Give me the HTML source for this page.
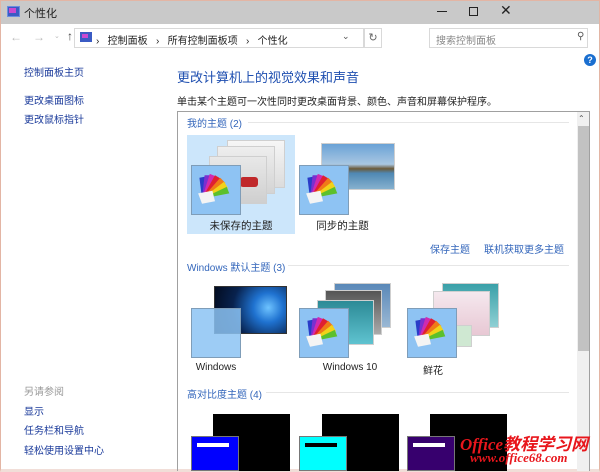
<!DOCTYPE html>
<html><head><meta charset="utf-8"><style>
*{margin:0;padding:0;box-sizing:border-box}
body{width:600px;height:472px;overflow:hidden;background:#fff;position:relative;font-family:"Liberation Sans","Noto Sans CJK SC",sans-serif;font-size:10px;color:#1e1e1e}
.a{position:absolute}
.lnk{color:#1a3a9a;font-size:10px}
.blue{color:#3366bb}
.hdr{color:#3366bb;font-size:10px}
.hline{position:absolute;height:1px;background:#e6e6e6}
.sq{position:absolute;width:50px;height:50px;background:#8ec3f3;border:1px solid #7f9db8}
.img{position:absolute;border:1px solid #cfcfcf}
.lbl{position:absolute;font-size:10px;color:#222;text-align:center}
</style></head><body>
<div class="a" style="left:0;top:0;width:600px;height:472px;border:1px solid #e3b5a4;border-bottom:3px solid #f1ded8"></div>
<div class="a" style="left:1px;top:1px;width:598px;height:23px;background:#c9c9c9"></div>
<div class="a" style="left:7px;top:6px;width:13px;height:11px;background:#3a5bc4;border:1px solid #6a8ee0"></div>
<div class="a" style="left:9px;top:8px;width:7px;height:5px;background:#c94ad0"></div>
<div class="a" style="left:24px;top:5px;font-size:11px">个性化</div>
<div class="a" style="left:437px;top:11px;width:10px;height:1px;background:#222"></div>
<div class="a" style="left:469px;top:7px;width:9px;height:9px;border:1px solid #222"></div>
<div class="a" style="left:500px;top:2px;font-size:14px;color:#222">✕</div>
<div class="a" style="left:10px;top:30px;color:#bbb;font-size:12px">←</div>
<div class="a" style="left:33px;top:30px;color:#bbb;font-size:12px">→</div>
<div class="a" style="left:54px;top:32px;color:#bbb;font-size:7px">⌄</div>
<div class="a" style="left:67px;top:29px;color:#444;font-size:12px">↑</div>
<div class="a" style="left:74px;top:28px;width:290px;height:20px;border:1px solid #d9d9d9"></div>
<div class="a" style="left:80px;top:32px;width:12px;height:10px;background:#3a5bc4"></div>
<div class="a" style="left:82px;top:34px;width:6px;height:4px;background:#c94ad0"></div>
<div class="a" style="left:96px;top:32px;font-size:10px">›&nbsp;&nbsp;&nbsp;控制面板&nbsp;&nbsp;&nbsp;›&nbsp;&nbsp;&nbsp;所有控制面板项&nbsp;&nbsp;&nbsp;›&nbsp;&nbsp;&nbsp;个性化</div>
<div class="a" style="left:342px;top:31px;color:#555;font-size:9px">⌄</div>
<div class="a" style="left:364px;top:28px;width:18px;height:20px;border:1px solid #d9d9d9;color:#666;font-size:11px;text-align:center;line-height:18px">↻</div>
<div class="a" style="left:429px;top:28px;width:159px;height:20px;border:1px solid #d9d9d9"></div>
<div class="a" style="left:436px;top:32px;color:#888">搜索控制面板</div>
<div class="a" style="left:577px;top:31px;color:#555;font-size:10px">⚲</div>
<div class="a" style="left:584px;top:54px;width:12px;height:12px;border-radius:50%;background:#1a6fd0;color:#fff;font-size:9px;font-weight:bold;text-align:center;line-height:12px">?</div>
<div class="a lnk" style="left:24px;top:64px">控制面板主页</div>
<div class="a lnk" style="left:24px;top:92px">更改桌面图标</div>
<div class="a lnk" style="left:24px;top:111px">更改鼠标指针</div>
<div class="a" style="left:24px;top:383px;color:#999">另请参阅</div>
<div class="a lnk" style="left:24px;top:403px">显示</div>
<div class="a lnk" style="left:24px;top:422px">任务栏和导航</div>
<div class="a lnk" style="left:24px;top:442px">轻松使用设置中心</div>
<div class="a" style="left:177px;top:67px;font-size:13px;color:#1f4fb0">更改计算机上的视觉效果和声音</div>
<div class="a" style="left:177px;top:93px;font-size:10px;color:#222">单击某个主题可一次性同时更改桌面背景、颜色、声音和屏幕保护程序。</div>
<div class="a" style="left:177px;top:111px;width:413px;height:360px;border:1px solid #a0a0a0;border-bottom:none;overflow:hidden">
 <div class="a" style="left:399px;top:0;width:13px;height:360px;background:#f0f0f0"></div>
 <div class="a" style="left:400px;top:2px;font-size:8px;color:#555">⌃</div>
 <div class="a" style="left:400px;top:14px;width:11px;height:225px;background:#c2c2c2"></div>
</div>
<div class="a hdr" style="left:187px;top:115px">我的主题 (2)</div>
<div class="hline" style="left:248px;top:122px;width:321px"></div>
<div class="a" style="left:187px;top:135px;width:108px;height:99px;background:#cce6fb"></div>
<div class="img" style="left:227px;top:140px;width:58px;height:48px;background:linear-gradient(#f6f6f6,#dcdcdc)"></div>
<div class="img" style="left:217px;top:146px;width:58px;height:48px;background:linear-gradient(#eee,#d4d4d4)"></div>
<div class="img" style="left:209px;top:156px;width:58px;height:48px;background:linear-gradient(#e8e8e8,#cfcfcf)"></div>
<div class="a" style="left:240px;top:177px;width:18px;height:10px;background:#c0282a;border-radius:3px"></div>
<div class="sq" style="left:191px;top:165px"></div>
<div class="lbl" style="left:187px;top:218px;width:108px;font-size:10.5px">未保存的主题</div>
<div class="img" style="left:321px;top:143px;width:74px;height:47px;background:linear-gradient(#6aa2d6 0%,#a9c7e2 45%,#6b5a3a 55%,#4f88b3 65%,#86b1cf 100%)"></div>
<div class="sq" style="left:299px;top:165px"></div>
<div class="lbl" style="left:295px;top:218px;width:95px;font-size:10.5px">同步的主题</div>
<div class="a blue" style="left:430px;top:241px">保存主题</div>
<div class="a blue" style="left:484px;top:241px">联机获取更多主题</div>
<div class="a hdr" style="left:187px;top:259px">Windows 默认主题 (3)</div>
<div class="hline" style="left:288px;top:265px;width:281px"></div>
<div class="img" style="left:214px;top:286px;width:73px;height:48px;background:radial-gradient(circle at 75% 45%,#6ec3ff 0,#1f72d0 25%,#08224e 60%,#020a1c 100%);border-color:#333"></div>
<div class="a" style="left:191px;top:308px;width:50px;height:50px;background:rgba(140,195,243,.85);border:1px solid #7f9db8"></div>
<div class="img" style="left:334px;top:283px;width:57px;height:45px;background:linear-gradient(#5a88b8,#9ab8d4)"></div>
<div class="img" style="left:325px;top:290px;width:57px;height:45px;background:linear-gradient(#555,#aaa)"></div>
<div class="img" style="left:317px;top:300px;width:57px;height:45px;background:linear-gradient(#2c8a96,#5fc3d0)"></div>
<div class="sq" style="left:299px;top:308px"></div>
<div class="img" style="left:442px;top:283px;width:57px;height:45px;background:linear-gradient(#3aa0a8,#8fd0d4)"></div>
<div class="img" style="left:433px;top:291px;width:57px;height:45px;background:linear-gradient(#f5e8ee,#e8c8d4)"></div>
<div class="img" style="left:442px;top:325px;width:30px;height:22px;background:#cfe8d2"></div>
<div class="sq" style="left:407px;top:308px"></div>
<div class="lbl" style="left:191px;top:362px;width:50px">Windows</div>
<div class="lbl" style="left:310px;top:362px;width:80px">Windows 10</div>
<div class="lbl" style="left:418px;top:362px;width:30px">鲜花</div>
<div class="a hdr" style="left:187px;top:386px">高对比度主题 (4)</div>
<div class="hline" style="left:266px;top:392px;width:303px"></div>
<div class="a" style="left:213px;top:414px;width:77px;height:57px;background:#000"></div>
<div class="a" style="left:191px;top:436px;width:48px;height:35px;background:#0000ff;border:1px solid #777"></div>
<div class="a" style="left:197px;top:443px;width:32px;height:4px;background:#fff"></div>
<div class="a" style="left:322px;top:414px;width:77px;height:57px;background:#000"></div>
<div class="a" style="left:299px;top:436px;width:48px;height:35px;background:#00ffff;border:1px solid #777"></div>
<div class="a" style="left:305px;top:443px;width:32px;height:4px;background:#000"></div>
<div class="a" style="left:430px;top:414px;width:77px;height:57px;background:#000"></div>
<div class="a" style="left:407px;top:436px;width:48px;height:35px;background:#37006e;border:1px solid #777"></div>
<div class="a" style="left:413px;top:443px;width:32px;height:4px;background:#fff"></div>
<div class="a" style="left:460px;top:430px;font-size:17px;font-weight:bold;font-style:italic;color:#e8161c;font-family:'Liberation Serif','Noto Sans CJK SC',serif">Office教程学习网</div>
<div class="a" style="left:470px;top:450px;font-size:13px;font-weight:bold;font-style:italic;color:#e8161c;font-family:'Liberation Serif',serif">www.office68.com</div>
<svg class="a" style="left:0;top:0" width="600" height="472">
<defs><g id="fan" transform="scale(1.3)">
<path d="M0 22 L-2 6 L3 5Z" fill="#2a3cc8"/>
<path d="M0 22 L2 4 L7 4Z" fill="#7a2fd0"/>
<path d="M0 22 L6 3 L11 5Z" fill="#d02ab0"/>
<path d="M0 22 L10 4 L15 7Z" fill="#e02030"/>
<path d="M0 22 L14 6 L18 10Z" fill="#f07a18"/>
<path d="M0 22 L17 9 L20 14Z" fill="#f2d21a"/>
<path d="M0 22 L19 13 L21 18Z" fill="#5cc02c"/>
<path d="M-3 18 L8 16 L10 24 L0 26Z" fill="#f4f4f4"/>
</g></defs>
<use href="#fan" x="202" y="170"/>
<use href="#fan" x="310" y="170"/>
<use href="#fan" x="310" y="313"/>
<use href="#fan" x="418" y="313"/>
</svg>
</body></html>
